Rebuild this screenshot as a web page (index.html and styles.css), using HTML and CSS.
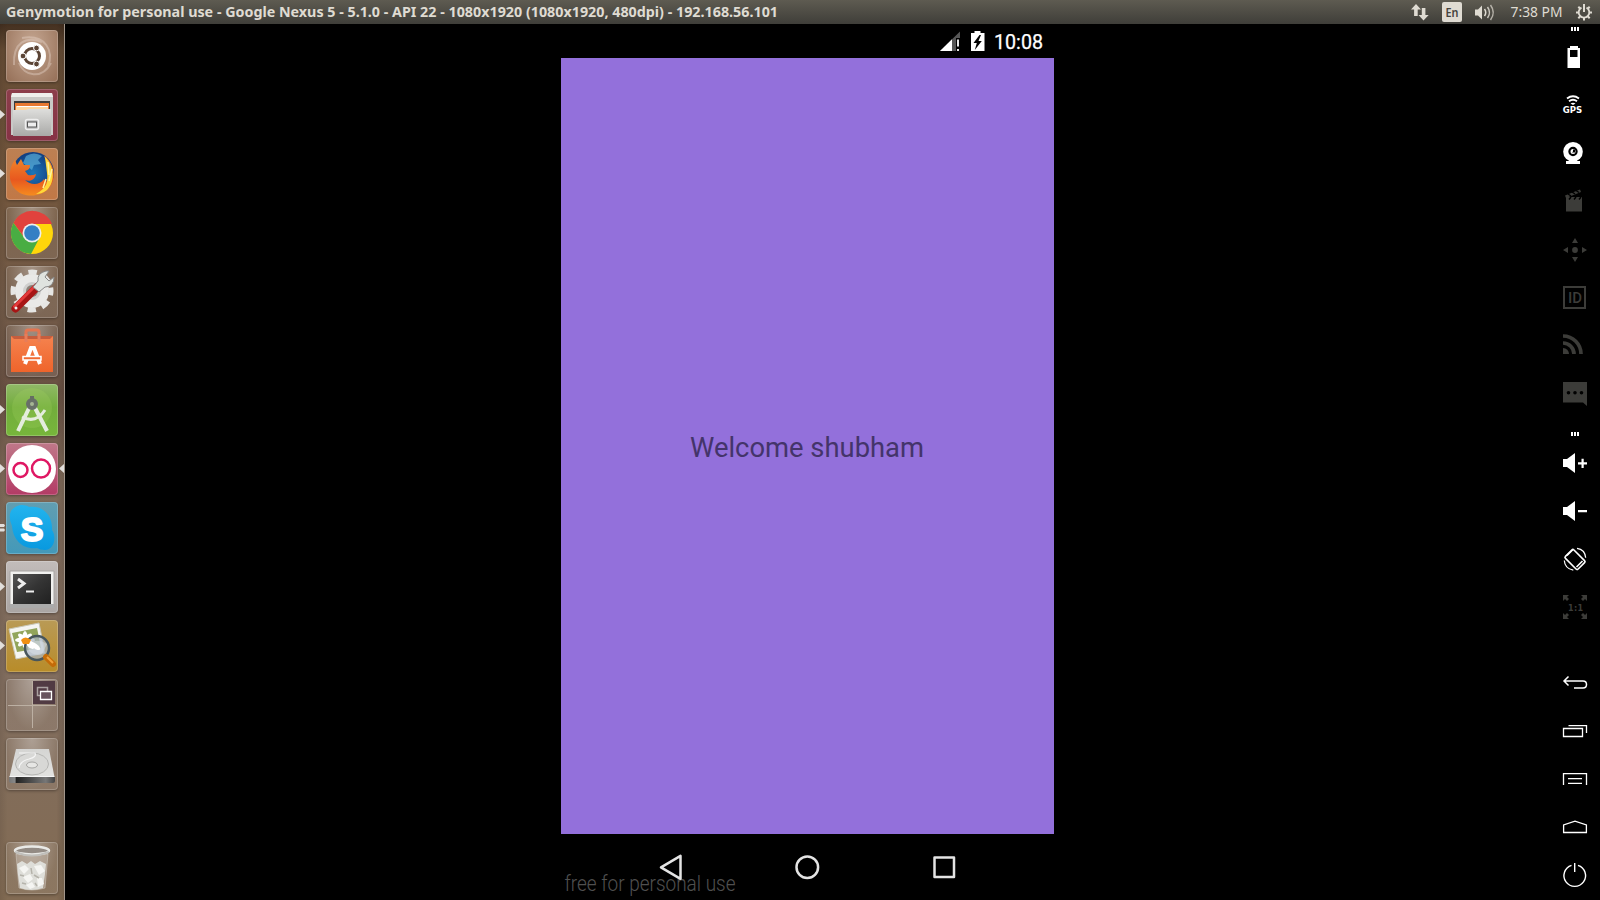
FILE: index.html
```html
<!DOCTYPE html>
<html lang="en">
<head>
<meta charset="utf-8">
<title>Genymotion</title>
<link rel="stylesheet" href="styles.css">
</head>
<body>
<header class="panel">
  <svg class="title" viewBox="0 0 800 24"><text x="6" y="16.500" textLength="772" lengthAdjust="spacingAndGlyphs">Genymotion for personal use - Google Nexus 5 - 5.1.0 - API 22 - 1080x1920 (1080x1920, 480dpi) - 192.168.56.101</text></svg>
  <svg class="tray" viewBox="1400 0 200 24">
    <g fill="#dfdbd2">
      <path d="M1416 4l5 5.500h-3.300V16h-3.600V9.500H1411zM1423.500 20.500l-5-5.500h3.300V8h3.600v7h3.300z"/>
      <rect x="1442" y="2" width="20" height="20" rx="2"/>
      <path d="M1475 9.500h3l4-4v14l-4-4h-3z"/>
    </g>
    <text class="lang" x="1445.500" y="17" textLength="13" lengthAdjust="spacingAndGlyphs">En</text>
    <g fill="none" stroke="#dfdbd2" stroke-width="1.500">
      <path d="M1484.500 9q2.500 3.500 0 7"/><path d="M1487.500 7q4 5.500 0 11" opacity=".85"/><path d="M1490.500 5q5.500 7.500 0 15" opacity=".7"/>
      <path d="M1581.500 7.600A5.300 5.300 0 1 0 1586.500 7.600" stroke-width="1.800"/>
      <path d="M1584 4v8" stroke-width="2"/>
      <path d="M1576 12.500h2.500M1589.500 12.500h2.500M1584 18v2.500M1578.300 6.800l2 2M1589.700 6.800l-2 2M1578.300 18.200l2-2M1589.700 18.200l-2-2" stroke-width="2"/>
    </g>
    <text class="clock" x="1510.500" y="17" textLength="52" lengthAdjust="spacingAndGlyphs">7:38 PM</text>
  </svg>
</header>
<main class="screen">
<nav class="launcher">
  <svg class="tile warm" viewBox="0 0 52 52"><g fill="none" stroke="#e8d8cc" stroke-opacity=".4" stroke-width="2"><path d="M8 35C7 12 20 6 36 12M16 8C40 4 48 21 42 37M45 33C36 50 18 46 13 33"/></g><circle cx="26" cy="26" r="14" fill="#fff"/><circle cx="26" cy="26" r="7.500" fill="none" stroke="#5b4435" stroke-width="3"/><g fill="#5b4435" stroke="#fff" stroke-width="1"><circle cx="17" cy="26" r="2.900"/><circle cx="30.500" cy="18" r="2.900"/><circle cx="30.500" cy="34" r="2.900"/></g></svg>
  <svg class="tile wine" viewBox="0 0 52 52"><path d="M6 4h40l1 4v38H5V8z" fill="#c9c9c7"/><path d="M6 4h40l1 4H5z" fill="#efefed"/><path d="M8 12h36v11H8z" fill="#3d3b39"/><path d="M9 14h34v9H9z" fill="#e87830"/><path d="M10 17h32v4H10z" fill="#ffd6a0"/><path d="M11 17.500h31" stroke="#fff" stroke-width="1.200"/><path d="M7 21h13l2-1h23v27H7z" fill="url(#steel)"/><rect x="19.500" y="30.500" width="13" height="10" rx="2" fill="#bbb" stroke="#eee" stroke-width="1.500"/><rect x="21.500" y="33" width="9" height="5" fill="#eee" stroke="#555"/></svg>
  <svg class="tile orange" viewBox="0 0 52 52"><circle cx="27" cy="25" r="21" fill="url(#sea)"/><path d="M20 8q8-5 16 0l-4 4 3 4-7 1-2 5-9-7z" fill="#5db2dc" opacity=".65"/><path d="M40 9C49 18 51 32 42 41C35 49 18 50 10 42C1 33 3 19 9 12l2 5 4-6 3 6 6 0c0 4-2 5-5 6l3 4q4 1 8-1c-1 6-6 8-11 6 6 6 15 5 19-1l2 3c4-8 3-16-2-26z" fill="url(#fire)"/><path d="M39 9c9 9 11 24 2 33-4 3-8 4-11 4 12-7 12-13 11-21z" fill="#ffd83a"/><path d="M42 14l1 13M46 21l-3 12M40 31l-3 9" stroke="#fff4a0" stroke-width="1.500"/></svg>
  <svg class="tile plain" viewBox="0 0 52 52"><circle cx="26" cy="26" r="21" fill="#ffd60a"/><path d="M7.500 16A21 21 0 0 1 46 17H26L17 29z" fill="#e1423d"/><path d="M7.500 16A21 21 0 0 0 25 47l9-17-17-1z" fill="#49ad43"/><circle cx="26" cy="26" r="9.500" fill="#eee"/><circle cx="26" cy="26" r="7.800" fill="#347fc4"/></svg>
  <svg class="tile plain" viewBox="0 0 52 52"><circle cx="26" cy="25" r="19" fill="none" stroke="#e6e6e4" stroke-width="5" stroke-dasharray="8.500 6.420" stroke-dashoffset="4.200"/><circle cx="26" cy="25" r="13" fill="#cfcfcd" stroke="#e9e9e7" stroke-width="8"/><circle cx="26" cy="25" r="6" fill="#8c8177"/><path d="M9.500 42.500L31 21" stroke="#a71515" stroke-width="8" stroke-linecap="round"/><path d="M8.500 40.500L29 20" stroke="#e33a3a" stroke-width="3" stroke-linecap="round"/><path d="M27 21l5-6q-1-8 8-10l3 0-4 6 4 4 5-4q0 10-9 10l-6 5z" fill="#dfe3df" stroke="#888" stroke-width="1"/><circle cx="10" cy="42" r="1.500" fill="#eee"/></svg>
  <svg class="tile plain" viewBox="0 0 52 52"><path d="M20 15V7q0-2 2-2h9q2 0 2 2v8" fill="none" stroke="#e47550" stroke-width="3"/><path d="M5 11h42v36H5z" fill="url(#bag)"/><path d="M5 11l3 3h36l3-3z" fill="#c65d3d"/><path d="M20 17V9M33 17V9" stroke="#e77d59" stroke-width="3"/><path d="M19 39l6-16h3l6 16" fill="none" stroke="#fff" stroke-width="4"/><path d="M17 31.500h18v3.500H17z" fill="#f16a32" stroke="#fff" stroke-width="1.500"/></svg>
  <svg class="tile green" viewBox="0 0 52 52"><circle cx="26" cy="24" r="20" fill="#a3d25e" opacity=".25"/><path d="M25 20L12 47M27 20l14 27" stroke="#e4eddd" stroke-width="4"/><path d="M16 33q14 7 23-7" fill="none" stroke="#e4eddd" stroke-width="3"/><circle cx="26" cy="20" r="4" fill="#a6b594" stroke="#686f68" stroke-width="4"/><path d="M24 12h4v4h-4z" fill="#656d62"/></svg>
  <svg class="tile pink" viewBox="0 0 52 52"><circle cx="26" cy="26" r="24" fill="#fff"/><g fill="none" stroke="#df1763" stroke-width="2.500"><circle cx="14.500" cy="27" r="7"/><circle cx="35" cy="25.500" r="9"/></g></svg>
  <svg class="tile sky" viewBox="0 0 52 52"><path d="M5 9C10 2 18 2 23 5C37 3 47 14 46 28C51 35 48 48 39 48Q34 48 31 46C17 48 7 38 6 24Q2 15 5 9z" fill="url(#skype)"/><text class="skype-s" x="26" y="38.500" text-anchor="middle">S</text></svg>
  <svg class="tile silver" viewBox="0 0 52 52"><path d="M4 10h44v36H4z" fill="#f1f1ef" stroke="#a7a4a2"/><path d="M4 43h44v4H4z" fill="#aaa"/><path d="M7 13h38v30H7z" fill="url(#term)"/><path d="M12 18l6 4.500-6 4.500" fill="none" stroke="#eee" stroke-width="3"/><path d="M20 30.500h8" stroke="#eee" stroke-width="2"/></svg>
  <svg class="tile gold" viewBox="0 0 52 52"><path d="M3 9l30-6 6 30-29 6z" fill="#f5f5f2" stroke="#c9c7b7"/><path d="M6 13l25-5 4 20-24 4z" fill="#92a55c"/><g fill="#fff"><ellipse cx="19" cy="20" rx="10" ry="3"/><ellipse cx="19" cy="20" rx="3" ry="9"/><ellipse cx="19" cy="20" rx="3" ry="9" transform="rotate(48 19 20)"/><ellipse cx="19" cy="20" rx="3" ry="9" transform="rotate(-48 19 20)"/></g><circle cx="31" cy="28" r="12" fill="#a9b5c4" fill-opacity=".7" stroke="#48565c" stroke-width="2.500"/><path d="M21 25q10-8 20-1l-5 10q-7 3-13-3z" fill="#dce2e7" opacity=".5"/><g fill="#fff"><ellipse cx="24" cy="24" rx="3" ry="6" transform="rotate(-40 24 24)"/><ellipse cx="29" cy="26" rx="6" ry="2.500" transform="rotate(35 29 26)"/></g><path d="M15 20q4-5 10 0l-2 4h-6z" fill="#f09013"/><path d="M40 37l7 7" stroke="#c46b08" stroke-width="6" stroke-linecap="round"/><path d="M41 37l6 6" stroke="#f2a33a" stroke-width="2"/></svg>
  <svg class="tile plain" viewBox="0 0 52 52"><path d="M27 2h22v23H27z" fill="#513b43"/><path d="M26.500 2v47M2 26.500h48" stroke="#bcb0a3" stroke-width="1"/><path d="M31.500 8.500h10v8h-10z" fill="none" stroke="#aaa1a0" stroke-width="1.500"/><path d="M34.500 12.500h11v8h-11z" fill="#67545e" stroke="#fff" stroke-width="1.300"/></svg>
  <svg class="tile plain" viewBox="0 0 52 52"><path d="M10 11h33l5.500 28h-45z" fill="url(#lid)"/><path d="M3 38.500h46V43q0 2-2 2H5q-2 0-2-2z" fill="url(#edge)"/><path d="M3.500 38.500h45" stroke="#f5f5f5"/><ellipse cx="26" cy="26" rx="16.500" ry="11" fill="#d8d8d6" stroke="#b5b5b3"/><ellipse cx="26" cy="27" rx="5.500" ry="3" fill="#e6e6e4" stroke="#a5a5a3"/><path d="M13 15h16q2 4-6 6-9 2-10 9" fill="none" stroke="#f5f5f5" stroke-width="1.200"/></svg>
  <svg class="tile plain trash" viewBox="0 0 52 52"><path d="M10 12l3 34q13 4 26 0l3-34z" fill="#e5dfd8" fill-opacity=".3" stroke="#d5d0c8" stroke-opacity=".5"/><path d="M11 22l5-3 5 3 4-3 4 3 5-3 6 3-1 10-2 14q-12 4-23 0l-2-13z" fill="#deded9"/><path d="M13 26l6-3 4 4-5 5zM28 24l7-1 4 6-6 4zM17 35l7-3 3 5-5 4zM31 36l5 0 2 6-6 3zM20 43l6-3 3 5-5 2z" fill="#f5f5f2"/><path d="M14 33l4 1M25 26l1 6M28 33l5 3M16 41l4 1M29 41l2 3" stroke="#b5b3ab" stroke-width="1.500"/><ellipse cx="26" cy="8.500" rx="17" ry="4" fill="#938b84" stroke="#e9e9e6" stroke-width="2.500"/><path d="M9 10q17 7 34 0" fill="none" stroke="#c0bfbb" stroke-width="2"/></svg>
  <svg class="pips" viewBox="0 0 65 876"><g fill="#e2dfdc"><path d="M0 86l5 4.500-5 4.500zM0 145l5 4.500-5 4.500zM0 381l5 4.500-5 4.500zM0 440l5 4.500-5 4.500zM0 558l5 4.500-5 4.500zM0 617l5 4.500-5 4.500zM64 440l-5 4.500 5 4.500z"/><path d="M0 500h4l1 1.500-1 1.500H0zM0 504.500h4l1 1.500-1 1.500H0z"/></g></svg>
</nav>
<section class="stage">
  <div class="phone">
    <svg class="status" viewBox="561 24 493 34"><path d="M940 51l20-19.500V38h-4v13z" fill="#555"/><path d="M940 51l12-11.700V51z" fill="#fff"/><path d="M958 39.500v7M958 49v2" stroke="#fff" stroke-width="1.800"/><path d="M974.500 31h6v2h4v18H971V33h3.500z" fill="#fff"/><path d="M979.500 35l-6 8h3.300l-2 7 7-9h-3.300l2.500-6z" fill="#000"/><text class="time" x="994" y="49" textLength="49" lengthAdjust="spacingAndGlyphs">10:08</text></svg>
    <div class="app"><svg class="welcome" viewBox="0 0 493 60"><text x="129" y="38" textLength="234" lengthAdjust="spacingAndGlyphs">Welcome shubham</text></svg></div>
    <svg class="softkeys" viewBox="561 834 493 66"><text class="mark" x="564.500" y="890.500" textLength="171" lengthAdjust="spacingAndGlyphs">free for personal use</text><g fill="none" stroke="#e4e4e4" stroke-width="2.500" stroke-linejoin="round"><path d="M661 867.300l19.500-11.500v23z"/><circle cx="807.300" cy="867.300" r="10.800"/><path d="M934.500 857.500h19.500v19.500h-19.500z"/></g></svg>
  </div>
</section>
<aside class="tools">
  <svg class="grip top" viewBox="0 0 60 9"><path d="M31 3h2v4h-2zM34 3h2v4h-2zM37 3h2v4h-2z"/></svg>
  <svg class="tool" viewBox="0 0 60 48"><path fill-rule="evenodd" d="M30 13h8v2h2v20H27.500V15H30zM30 17v7h7.500v-7z"/></svg>
  <svg class="tool" viewBox="0 0 60 48"><g class="line"><path d="M27 17.500q6-4.500 12 0M29 20.300q4-3 8 0" stroke-width="1.900"/></g><path d="M30.500 22.500q2.500-1.500 5 0l-2.500 1.500z"/><text class="gps" x="22.700" y="32" textLength="19.500" lengthAdjust="spacingAndGlyphs">GPS</text></svg>
  <svg class="tool" viewBox="0 0 60 48"><circle cx="33" cy="22.700" r="9.800"/><path d="M29 30h8v2h3v3H26v-3h3z"/><circle cx="33" cy="22.500" r="3.600" fill="#fff" stroke="#000" stroke-width="2.200"/><path d="M33 22.500v-2h2v3h-3z" fill="#000"/></svg>
  <svg class="tool off" viewBox="0 0 60 48"><path d="M26 23h16v11.500H26z"/><path d="M25 18.500l15-6 1 2.500-15 6zM26 20h16v3H26z"/><path d="M28 17l3 2M32 15l3 2M36 13.500l3 2M29 22.500l2-2.500M34 22.500l2-2.500M39 22.500l2-2.500" stroke="#000" stroke-width="1.500"/></svg>
  <svg class="tool off" viewBox="0 0 60 48"><circle cx="35" cy="25" r="2.900"/><path d="M32 18l3-5 3 5zM32 32l3 5 3-5zM28 22l-5 3 5 3zM42 22l5 3-5 3z"/></svg>
  <svg class="tool off" viewBox="0 0 60 48"><path class="line" stroke-width="2" d="M24 14h21v21H24z"/><text class="id" x="28" y="30" textLength="14" lengthAdjust="spacingAndGlyphs">ID</text></svg>
  <svg class="tool off" viewBox="0 0 60 48"><g class="line" stroke-width="3.700"><path d="M23 15a18 18 0 0 1 18 18M23 22a11 11 0 0 1 11 11"/></g><path d="M23 27a6 6 0 0 1 6 6h-6z"/></svg>
  <svg class="tool off" viewBox="0 0 60 48"><path d="M23 13h24v24l-4-3.500H23z"/><g fill="#000"><circle cx="28.500" cy="23.800" r="1.800"/><circle cx="35" cy="23.800" r="1.800"/><circle cx="41.500" cy="23.800" r="1.800"/></g></svg>
  <svg class="grip mid" viewBox="0 0 60 22"><path d="M31 15h2v4h-2zM34 15h2v4h-2zM37 15h2v4h-2z"/></svg>
  <svg class="tool" viewBox="0 0 60 48"><path d="M23 20h4l8-6v20l-8-6h-4zM38 23.300h3.500v-3.600h2.200v3.600H47v2.200h-3.300v3.600h-2.200v-3.600H38z"/></svg>
  <svg class="tool" viewBox="0 0 60 48"><path d="M23 20h4l8-6v20l-8-6h-4zM38 23h9v2.200h-9z"/></svg>
  <svg class="tool" viewBox="0 0 60 48"><g class="line" stroke-width="1.600"><rect x="29" y="15.500" width="12" height="18" rx="1.500" transform="rotate(-45 35 24.500)"/><path d="M27 20.500l6-6M36.500 32l6-6" stroke-width="1.600"/><path d="M37 13.300q8 1 8.700 9.500M24.300 25.500q.5 8 9 9.700" stroke-width="1.200"/></g></svg>
  <svg class="tool off" viewBox="0 0 60 48"><path d="M23 12h6l-2 2 2 2-2 2-2-2-2 2zM47 12h-6l2 2-2 2 2 2 2-2 2 2zM23 36h6l-2-2 2-2-2-2-2 2-2-2zM47 36h-6l2-2-2-2 2-2 2 2 2-2z"/><text class="ratio" x="28" y="27.500" textLength="15" lengthAdjust="spacing">1:1</text></svg>
  <svg class="tool last" viewBox="0 0 60 48"><path class="line" stroke-width="1.500" d="M28.500 17.500L24 22l4.500 4.500M24 22h19q3.500 0 3.500 3.500T43 29H34"/></svg>
  <svg class="tool" viewBox="0 0 60 48"><path class="line" stroke-width="1.300" d="M23.500 21.500h19v8h-19zM28.500 18.700h18V26"/></svg>
  <svg class="tool" viewBox="0 0 60 48"><path class="line" stroke-width="1.300" d="M23.500 30V18.700h23V30M28 23.700h14M28 28.300h14"/></svg>
  <svg class="tool" viewBox="0 0 60 48"><path class="line" stroke-width="1.300" d="M23.600 29.500V22L35 18.200 46.400 22v7.500z"/></svg>
  <svg class="tool" viewBox="0 0 60 48"><path class="line" stroke-width="1.400" d="M31.500 14.300a10.800 10.800 0 1 0 6.500 0M34.700 12v9"/></svg>
</aside>
</main>
<svg class="defs"><defs>
  <linearGradient id="steel" x2="0" y2="1"><stop stop-color="#dededc"/><stop offset="1" stop-color="#a9a9a7"/></linearGradient>
  <linearGradient id="lid" x2="0" y2="1"><stop stop-color="#d5d5d3"/><stop offset="1" stop-color="#e3e3e1"/></linearGradient>
  <linearGradient id="edge"><stop stop-color="#777"/><stop offset=".13" stop-color="#888"/><stop offset=".16" stop-color="#222"/><stop offset=".8" stop-color="#777"/><stop offset="1" stop-color="#444"/></linearGradient>
  <radialGradient id="sea"><stop stop-color="#1c76b8"/><stop offset="1" stop-color="#123e80"/></radialGradient>
  <linearGradient id="fire" x2="0" y2="1"><stop stop-color="#f08a2c"/><stop offset=".6" stop-color="#e8581f"/><stop offset="1" stop-color="#f58b1f"/></linearGradient>
  <linearGradient id="bag" x2="0" y2="1"><stop stop-color="#f5834f"/><stop offset="1" stop-color="#ef642b"/></linearGradient>
  <linearGradient id="skype" x2="0" y2="1"><stop stop-color="#22b4ee"/><stop offset="1" stop-color="#0999df"/></linearGradient>
  <linearGradient id="term" x2="1" y2="1"><stop stop-color="#555"/><stop offset=".5" stop-color="#343434"/><stop offset="1" stop-color="#202020"/></linearGradient>
</defs></svg>
</body>
</html>
```
FILE: styles.css
```css
* { box-sizing: border-box; }
body { margin: 0; width: 1600px; height: 900px; overflow: hidden; background: #000; font-family: "Open Sans", sans-serif; }
svg { display: block; flex: none; }
.panel { display: flex; justify-content: space-between; height: 24px; background: linear-gradient(#5e5b51, #3f3e39); }
.title { width: 800px; height: 24px; font: bold 13.5px "Noto Sans", sans-serif; fill: #dfdbd2; }
.tray { width: 200px; height: 24px; }
.lang { font: 600 12.5px "Noto Sans", sans-serif; fill: #45433d; }
.clock { font: 13.5px "Noto Sans", sans-serif; fill: #dfdbd2; }
.screen { display: flex; height: 876px; }
.launcher {
  position: relative; display: flex; flex-direction: column; gap: 7px; width: 65px; padding: 6px 0 6px 6px;
  border-right: 1px solid #a1968b;
  background:
    linear-gradient(90deg, rgba(0,0,0,.08), transparent 12% 88%, rgba(0,0,0,.12)),
    linear-gradient(#443020, #664c35 3%, #73573e 20%, #735b48 32%, #6a5143 42%, #7f6a59 52%, #826e5f 75%, #826b53);
}
.tile { width: 52px; height: 52px; border-radius: 4px; border: 0; box-shadow: inset 0 0 0 1px rgba(255,255,255,.2), 0 1px 3px rgba(0,0,0,.35); }
.plain { background: radial-gradient(ellipse at 50% 0, rgba(255,255,255,.35), rgba(255,255,255,.08) 70%); }
.warm { background: radial-gradient(at 50% 30%, #c6a893, #946e56); }
.wine { background: linear-gradient(#8c3e4b, #863245); }
.orange { background: linear-gradient(#bd8053, #c17846); }
.green { background: linear-gradient(#91b967, #72ad3c 45%, #77b63b); }
.pink { background: linear-gradient(#bf7889, #b33b65); }
.sky { background: linear-gradient(#629eb1, #4399b9); }
.silver { background: linear-gradient(#c2bcba, #aaa5a3); }
.gold { background: linear-gradient(#b99a56, #b88c29); }
.trash { margin-top: auto; }
.pips { position: absolute; left: 0; top: 0; width: 65px; height: 876px; }
.skype-s { font: bold 34px "Liberation Sans", sans-serif; fill: #fff; stroke: #fff; stroke-width: 2; stroke-linejoin: round; }
.stage { flex: 1; padding-left: 496px; }
.phone { display: flex; flex-direction: column; width: 493px; height: 876px; }
.status { width: 493px; height: 34px; }
.time { font: 400 20px Roboto, sans-serif; fill: #fff; stroke: #fff; stroke-width: .25; }
.app { display: flex; align-items: center; height: 776px; background: #9370db; }
.welcome { width: 493px; height: 60px; margin-top: 5px; font: 28px Roboto, sans-serif; fill: #44346a; }
.softkeys { width: 493px; height: 66px; }
.mark { font: 300 22px Roboto, sans-serif; fill: #505050; }
.tools { display: flex; flex-direction: column; width: 60px; }
.tools svg { width: 60px; fill: #fff; stroke: none; }
.tools .top { height: 9px; }
.tools .mid { height: 22px; }
.tools .tool { height: 48px; }
.tools .off { fill: #3c3c39; }
.tools .last { margin-top: 28px; }
.line { fill: none; stroke: #fff; }
.off .line { stroke: #3c3c39; }
.gps { font: bold 8.5px "DejaVu Sans", sans-serif; }
.id { font: 500 15.5px Roboto, sans-serif; }
.ratio { font: bold 8px "DejaVu Sans", sans-serif; }
.defs { position: absolute; width: 0; height: 0; }
```
